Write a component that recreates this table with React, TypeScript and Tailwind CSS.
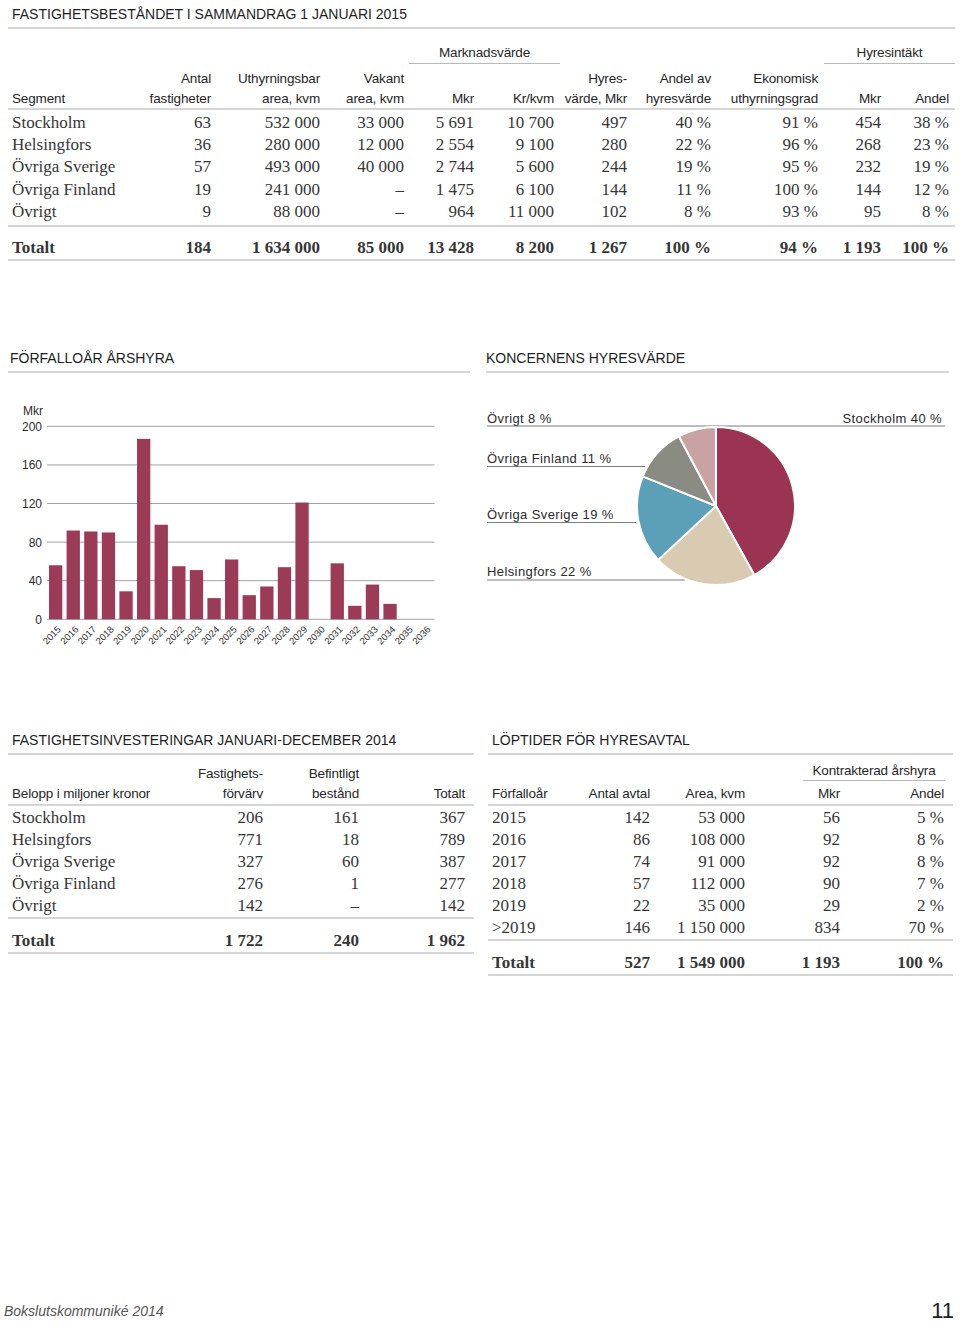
import type { ReactNode } from 'react'

const sans = "font-['Liberation_Sans',Arial,sans-serif]"
const serif = "font-['Liberation_Serif','Times_New_Roman',serif]"

// column templates, widths taken from the reference
const TOP_GRID = 'grid grid-cols-[132px_71px_109px_84px_70px_80px_73px_84px_107px_63px_68px] items-center'
const INV_GRID = 'grid grid-cols-[182px_73px_96px_106px] items-center'
const LOP_GRID = 'grid grid-cols-[92px_70px_95px_95px_104px] items-center'

const segments = [
  ['Stockholm', '63', '532 000', '33 000', '5 691', '10 700', '497', '40 %', '91 %', '454', '38 %'],
  ['Helsingfors', '36', '280 000', '12 000', '2 554', '9 100', '280', '22 %', '96 %', '268', '23 %'],
  ['Övriga Sverige', '57', '493 000', '40 000', '2 744', '5 600', '244', '19 %', '95 %', '232', '19 %'],
  ['Övriga Finland', '19', '241 000', '–', '1 475', '6 100', '144', '11 %', '100 %', '144', '12 %'],
  ['Övrigt', '9', '88 000', '–', '964', '11 000', '102', '8 %', '93 %', '95', '8 %'],
]
const segmentTotal = ['Totalt', '184', '1 634 000', '85 000', '13 428', '8 200', '1 267', '100 %', '94 %', '1 193', '100 %']

const investments = [
  ['Stockholm', '206', '161', '367'],
  ['Helsingfors', '771', '18', '789'],
  ['Övriga Sverige', '327', '60', '387'],
  ['Övriga Finland', '276', '1', '277'],
  ['Övrigt', '142', '–', '142'],
]

const leases = [
  ['2015', '142', '53 000', '56', '5 %'],
  ['2016', '86', '108 000', '92', '8 %'],
  ['2017', '74', '91 000', '92', '8 %'],
  ['2018', '57', '112 000', '90', '7 %'],
  ['2019', '22', '35 000', '29', '2 %'],
  ['>2019', '146', '1 150 000', '834', '70 %'],
]

const bars = [56, 92, 91, 90, 29, 187, 98, 55, 51, 22, 62, 25, 34, 54, 121, 0, 58, 14, 36, 16, 0, 0]

function SectionTitle({ children, className = '' }: { children: ReactNode; className?: string }) {
  return (
    <div className={`border-b-2 border-[#d5d5d5] pb-[3px] text-[14px] leading-[20px] text-[#1e1e1e] ${sans} ${className}`}>
      {children}
    </div>
  )
}

function Cells({ cells, bold = false }: { cells: string[]; bold?: boolean }) {
  return (
    <>
      {cells.map((c, i) => (
        <div key={i} className={`${i === 0 ? 'pl-1 text-left' : 'text-right'} whitespace-nowrap ${bold ? 'font-bold' : ''}`}>
          {c}
        </div>
      ))}
    </>
  )
}

function BarChart() {
  const zero = 619.3
  const scale = 0.965
  const ticks = [0, 40, 80, 120, 160, 200]
  return (
    <svg width="480" height="260" viewBox="0 395 480 260" className="mt-[22px] block" fontFamily="Liberation Sans, Arial, sans-serif">
      {ticks.map((t) => {
        const y = zero - t * scale
        return (
          <g key={t}>
            <line x1="47" x2="434.5" y1={y} y2={y} stroke="#a3a3a3" strokeWidth="1" />
            <text x="42" y={y + 4.5} textAnchor="end" fontSize="12" fill="#2b2b2b">
              {t}
            </text>
          </g>
        )
      })}
      <text x="43" y="415" textAnchor="end" fontSize="12" fill="#2b2b2b">
        Mkr
      </text>
      {bars.map((v, i) => {
        const x = 49 + i * 17.6
        const cx = x + 6.6
        return (
          <g key={i}>
            {v > 0 && <rect x={x} y={zero - v * scale} width="13.3" height={v * scale} fill="#9b3b58" />}
            <text x={cx + 6} y="630" textAnchor="end" fontSize="9.5" fill="#333" transform={`rotate(-45 ${cx + 6} 630)`}>
              {2015 + i}
            </text>
          </g>
        )
      })}
    </svg>
  )
}

function PieChart() {
  const cx = 716
  const cy = 506
  const r = 79
  const slices = [
    { from: 0, to: 151, color: '#9b3453' },
    { from: 151, to: 227, color: '#d8cbb1' },
    { from: 227, to: 292, color: '#5b9fb9' },
    { from: 292, to: 332, color: '#8a8b83' },
    { from: 332, to: 360, color: '#c9a3a4' },
  ]
  const pt = (a: number) => {
    const rad = (a * Math.PI) / 180
    return `${(cx + r * Math.sin(rad)).toFixed(2)} ${(cy - r * Math.cos(rad)).toFixed(2)}`
  }
  const labels = [
    { text: 'Övrigt 8 %', y: 422.5, line: 426, x2: 716 },
    { text: 'Övriga Finland 11 %', y: 462.5, line: 466.5, x2: 645 },
    { text: 'Övriga Sverige 19 %', y: 519, line: 522.5, x2: 636 },
    { text: 'Helsingfors 22 %', y: 575.5, line: 580, x2: 685 },
  ]
  return (
    <svg width="480" height="210" viewBox="480 395 480 210" className="mt-[22px] block" fontFamily="Liberation Sans, Arial, sans-serif">
      {labels.map((l) => (
        <g key={l.text}>
          <line x1="487" x2={l.x2} y1={l.line} y2={l.line} stroke="#7d7d7d" strokeWidth="1" />
          <text x="487" y={l.y} fontSize="13" letterSpacing="0.4" fill="#2b2b2b">
            {l.text}
          </text>
        </g>
      ))}
      <line x1="716" x2="945" y1="426" y2="426" stroke="#7d7d7d" strokeWidth="1" />
      <text x="942" y="422.5" textAnchor="end" fontSize="13" letterSpacing="0.4" fill="#2b2b2b">
        Stockholm 40 %
      </text>
      {slices.map((s) => (
        <path
          key={s.from}
          d={`M ${cx} ${cy} L ${pt(s.from)} A ${r} ${r} 0 ${s.to - s.from > 180 ? 1 : 0} 1 ${pt(s.to)} Z`}
          fill={s.color}
          stroke="#ffffff"
          strokeWidth="2"
          strokeLinejoin="round"
        />
      ))}
    </svg>
  )
}

export default function App() {
  return (
    <div className="flex h-[1325px] w-[960px] flex-col bg-white text-[#2e2e2e]">
      {/* Fastighetsbeståndet */}
      <div className="ml-2 w-[947px] pt-[4px]">
        <SectionTitle className="pb-[1px] pl-1">FASTIGHETSBESTÅNDET I SAMMANDRAG 1 JANUARI 2015</SectionTitle>

        <div className={`pr-[6px] text-[13.5px] tracking-[-0.15px] text-[#262626] ${sans}`}>
          <div className={`${TOP_GRID} mt-[15px] h-[20px]`}>
            <div className="col-start-5 col-span-2 -mr-[6px] ml-[5px] flex h-[20px] items-center justify-center border-b border-[#b9b9b9]">
              Marknadsvärde
            </div>
            <div className="col-start-10 col-span-2 -mr-[6px] ml-[6px] flex h-[20px] items-center justify-center border-b border-[#b9b9b9]">
              Hyresintäkt
            </div>
          </div>
          <div className={`${TOP_GRID} mt-[5px] h-[20px]`}>
            <Cells cells={['', 'Antal', 'Uthyrningsbar', 'Vakant', '', '', 'Hyres-', 'Andel av', 'Ekonomisk', '', '']} />
          </div>
          <div className={`${TOP_GRID} -mr-[6px] h-[21px] border-b-2 border-[#d5d5d5] pr-[6px] pb-[1px]`}>
            <Cells cells={['Segment', 'fastigheter', 'area, kvm', 'area, kvm', 'Mkr', 'Kr/kvm', 'värde, Mkr', 'hyresvärde', 'uthyrningsgrad', 'Mkr', 'Andel']} />
          </div>
        </div>

        <div className={`text-[17px] leading-none text-[#363636] ${serif}`}>
          <div className="border-b-2 border-[#d5d5d5] pt-[1px] pb-[2px] pr-[6px]">
            {segments.map((row) => (
              <div key={row[0]} className={`${TOP_GRID} h-[22.4px]`}>
                <Cells cells={row} />
              </div>
            ))}
          </div>
          <div className={`${TOP_GRID} mt-[10px] h-[24px] border-b-2 border-[#d5d5d5] pr-[6px] pb-[1px]`}>
            <Cells cells={segmentTotal} bold />
          </div>
        </div>
      </div>

      {/* Förfalloår årshyra / Koncernens hyresvärde */}
      <div className="mt-[87px] flex">
        <div className="w-[480px]">
          <SectionTitle className="ml-2 w-[462px] pl-[2px]">FÖRFALLOÅR ÅRSHYRA</SectionTitle>
          <BarChart />
        </div>
        <div className="w-[480px]">
          <SectionTitle className="ml-[6px] w-[463px]">KONCERNENS HYRESVÄRDE</SectionTitle>
          <PieChart />
        </div>
      </div>

      {/* Investeringar / Löptider */}
      <div className="mt-[75px] flex">
        <div className="ml-2 w-[466px]">
          <SectionTitle className="pl-1">FASTIGHETSINVESTERINGAR JANUARI-DECEMBER 2014</SectionTitle>
          <div className={`pr-[9px] text-[13.5px] tracking-[-0.15px] text-[#262626] ${sans}`}>
            <div className={`${INV_GRID} mt-[9px] h-[20px]`}>
              <Cells cells={['', 'Fastighets-', 'Befintligt', '']} />
            </div>
            <div className={`${INV_GRID} -mr-[9px] h-[22px] border-b-2 border-[#d5d5d5] pr-[9px]`}>
              <Cells cells={['Belopp i miljoner kronor', 'förvärv', 'bestånd', 'Totalt']} />
            </div>
          </div>
          <div className={`text-[17px] leading-none text-[#363636] ${serif}`}>
            <div className="border-b-2 border-[#d5d5d5] pr-[9px]">
              {investments.map((row) => (
                <div key={row[0]} className={`${INV_GRID} h-[22.2px]`}>
                  <Cells cells={row} />
                </div>
              ))}
            </div>
            <div className={`${INV_GRID} mt-[11px] h-[24px] border-b-2 border-[#d5d5d5] pr-[9px] pb-[1px]`}>
              <Cells cells={['Totalt', '1 722', '240', '1 962']} bold />
            </div>
          </div>
        </div>

        <div className="ml-[14px] w-[465px]">
          <SectionTitle className="pl-1">LÖPTIDER FÖR HYRESAVTAL</SectionTitle>
          <div className={`pr-[9px] text-[13.5px] tracking-[-0.15px] text-[#262626] ${sans}`}>
            <div className={`${LOP_GRID} mt-[8px] h-[18px]`}>
              <div className="col-start-4 col-span-2 -mr-px ml-[58px] flex h-[18px] items-center justify-center border-b border-[#b9b9b9]">
                Kontrakterad årshyra
              </div>
            </div>
            <div className={`${LOP_GRID} -mr-[9px] mt-[3px] h-[22px] border-b-2 border-[#d5d5d5] pr-[9px]`}>
              <Cells cells={['Förfalloår', 'Antal avtal', 'Area, kvm', 'Mkr', 'Andel']} />
            </div>
          </div>
          <div className={`text-[17px] leading-none text-[#363636] ${serif}`}>
            <div className="border-b-2 border-[#d5d5d5] pr-[9px]">
              {leases.map((row) => (
                <div key={row[0]} className={`${LOP_GRID} h-[22.2px]`}>
                  <Cells cells={row} />
                </div>
              ))}
            </div>
            <div className={`${LOP_GRID} mt-[11px] h-[24px] border-b-2 border-[#d5d5d5] pr-[9px] pb-[1px]`}>
              <Cells cells={['Totalt', '527', '1 549 000', '1 193', '100 %']} bold />
            </div>
          </div>
        </div>
      </div>

      {/* Footer */}
      <div className={`mt-auto flex items-end justify-between pb-[2px] pl-1 pr-[6px] ${sans}`}>
        <div className="mb-[4px] text-[14px] leading-[16px] text-[#555] italic">Bokslutskommuniké 2014</div>
        <div className="text-[22px] leading-[24px] text-[#222]">11</div>
      </div>
    </div>
  )
}
